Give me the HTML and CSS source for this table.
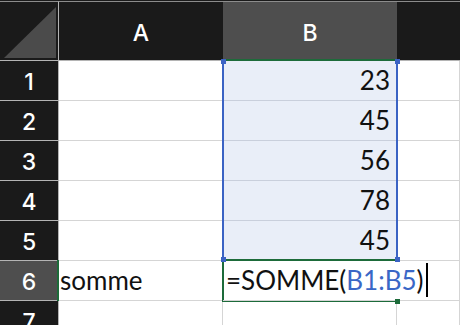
FILE: index.html
```html
<!DOCTYPE html>
<html lang="fr">
<head>
<meta charset="utf-8">
<link rel="stylesheet" href="styles.css">
</head>
<body>
<div class="sheet">
  <div class="grid">
    <div class="corner">
      <svg class="corner-tri" width="58" height="58" viewBox="0 0 58 58"><polygon points="4,56 56,56 56,5" fill="#4b4b4b"/></svg>
    </div>
    <div class="ch">A</div>
    <div class="ch ch-sel">B</div>
    <div class="ch ch-last"></div>

    <div class="rh">1</div><div class="c"></div><div class="c num inrange">23</div><div class="c"></div>
    <div class="rh">2</div><div class="c"></div><div class="c num inrange">45</div><div class="c"></div>
    <div class="rh">3</div><div class="c"></div><div class="c num inrange">56</div><div class="c"></div>
    <div class="rh">4</div><div class="c"></div><div class="c num inrange">78</div><div class="c"></div>
    <div class="rh">5</div><div class="c"></div><div class="c num inrange">45</div><div class="c"></div>
    <div class="rh rh-act">6</div><div class="c txt">somme</div><div class="c formula"><span class="val">=SOMME(<span class="ref">B1:B5</span>)<span class="caret"></span></span></div><div class="c"></div>
    <div class="rh">7</div><div class="c"></div><div class="c"></div><div class="c"></div>
  </div>

  <div class="hdr-mark"></div>
  <div class="row-mark"></div>
  <div class="range"></div>
  <div class="active"></div>
  <div class="handle h-tl"></div>
  <div class="handle h-tr"></div>
  <div class="handle h-bl"></div>
  <div class="handle h-br"></div>
  <div class="handle green h-act"></div>
</div>
</body>
</html>
```

FILE: styles.css
```css
html, body {
  margin: 0;
  padding: 0;
  background: #ffffff;
}
.sheet {
  position: relative;
  width: 460px;
  height: 325px;
  overflow: hidden;
  background: #ffffff;
  padding-top: 1px;
  box-sizing: border-box;
}
.sheet::before {
  content: "";
  position: absolute;
  left: 0;
  top: 0;
  width: 100%;
  height: 1px;
  background: #1a1a1a;
}
.grid {
  display: grid;
  grid-template-columns: 59px 164px 174px 1fr;
  grid-template-rows: 60px repeat(7, 40px);
}
.corner, .ch, .rh {
  background: #1a1a1a;
  color: #ffffff;
  font-family: "Inter", "Liberation Sans", sans-serif;
  font-size: 23px;
  font-weight: 500;
  box-sizing: border-box;
  display: flex;
  align-items: center;
  justify-content: center;
}
.corner {
  border-top: 1px solid #8c8c8c;
  border-right: 1px solid #b4b4b4;
  border-bottom: 1px solid #b4b4b4;
  align-items: flex-start;
  justify-content: flex-start;
}
.corner-tri {
  display: block;
}
.ch {
  border-top: 1px solid #8c8c8c;
  border-bottom: 1px solid #b4b4b4;
  padding-top: 4px;
}
.ch-sel {
  background: #4e4e4e;
}
.rh {
  border-right: 1px solid #b4b4b4;
  border-bottom: 1px solid #b4b4b4;
  padding-top: 3px;
}
.rh-act {
  background: #4e4e4e;
}
.c {
  box-sizing: border-box;
  border-right: 1px solid #d5d5d5;
  border-bottom: 1px solid #d5d5d5;
  font-family: "Lato", "Open Sans", sans-serif;
  font-size: 26px;
  line-height: 26px;
  color: #111111;
  display: flex;
  align-items: flex-end;
  padding-bottom: 7px;
  white-space: nowrap;
  overflow: visible;
}
.inrange {
  background: #e9eef8;
  border-bottom-color: #c9cfdc;
}
.num {
  justify-content: flex-end;
  padding-right: 6px;
}
.txt {
  padding-left: 1px;
}
.formula {
  padding-left: 3px;
  border-right-color: transparent;
  position: relative;
  z-index: 2;
}
.val {
  flex-shrink: 0;
  white-space: nowrap;
  line-height: 26px;
}
.ref {
  color: #3a67c6;
}
.caret {
  display: inline-block;
  width: 2px;
  height: 22px;
  background: #000000;
  margin-left: 3px;
  vertical-align: baseline;
  box-shadow: 0 -12px 0 0 #000000;
  position: relative;
  top: 7px;
}
.hdr-mark {
  position: absolute;
  left: 222px;
  top: 59px;
  width: 176px;
  height: 2px;
  background: #1d6b3a;
}
.row-mark {
  position: absolute;
  left: 57px;
  top: 260px;
  width: 2px;
  height: 41px;
  background: #1d6b3a;
}
.range {
  position: absolute;
  left: 222px;
  top: 61px;
  width: 176px;
  height: 199px;
  box-sizing: border-box;
  border-left: 2px solid #3b63c4;
  border-right: 2px solid #3b63c4;
}
.active {
  position: absolute;
  left: 222px;
  top: 259px;
  width: 176px;
  height: 43px;
  box-sizing: border-box;
  border: 2px solid #1d6b3a;
  border-right: 0;
  z-index: 1;
}
.handle {
  position: absolute;
  width: 5px;
  height: 5px;
  background: #3b63c4;
  z-index: 3;
}
.h-tl { left: 221px; top: 59px; }
.h-tr { left: 395px; top: 59px; }
.h-bl { left: 221px; top: 257px; }
.h-br { left: 395px; top: 257px; }
.green { background: #1d6b3a; }
.h-act { left: 395px; top: 299px; }
```
